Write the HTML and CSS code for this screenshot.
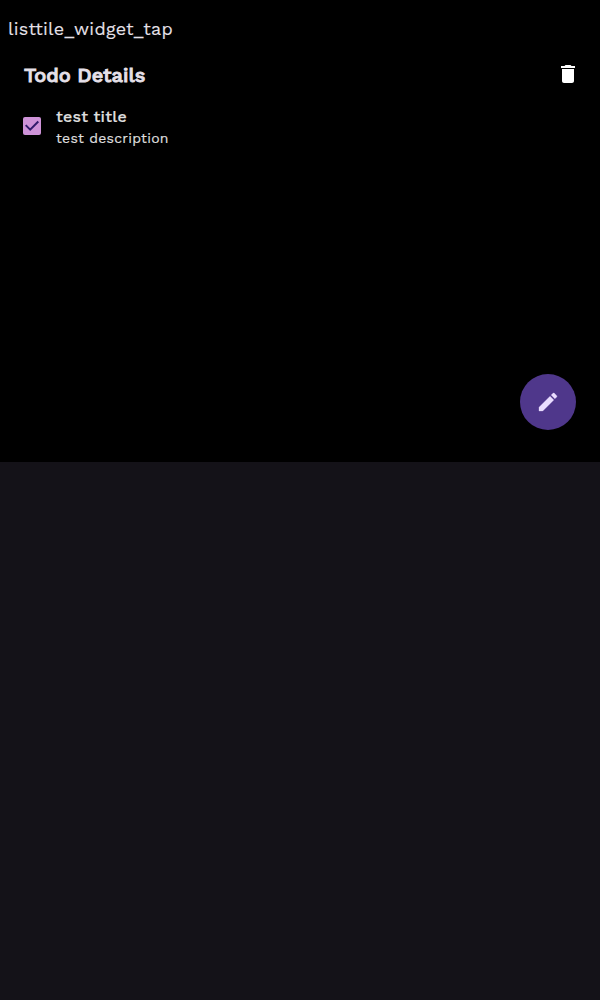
FILE: index.html
```html
<!DOCTYPE html>
<html lang="en">
<head>
<meta charset="utf-8">
<title>Todo Details</title>
<link rel="stylesheet" href="styles.css">
</head>
<body>
<main class="scenario">
  <div class="scenario-name"><span>listtile_widget_tap</span></div>
  <section class="screen">
    <header class="app-bar">
      <h1 class="app-title">Todo Details</h1>
      <svg class="icon delete" viewBox="0 0 24 24"><path d="M6 19c0 1.1.9 2 2 2h8c1.1 0 2-.9 2-2V7H6v12zM19 4h-3.5l-1-1h-5l-1 1H5v2h14V4z"/></svg>
    </header>
    <div class="todo">
      <svg class="checkbox" viewBox="0 0 18 18"><rect class="box" width="18" height="18" rx="2"/><path class="check" d="M2.7 8.1L7.2 12.6L15.3 4.5"/></svg>
      <div class="todo-text">
        <div class="todo-title">test title</div>
        <div class="todo-description">test description</div>
      </div>
    </div>
    <div class="fab">
      <svg class="icon edit" viewBox="0 0 24 24"><path d="M3 17.25V21h3.75L17.81 9.94l-3.75-3.75L3 17.25zM20.71 7.04c.39-.39.39-1.02 0-1.41l-2.34-2.34c-.39-.39-1.02-.39-1.41 0l-1.83 1.83 3.75 3.75 1.83-1.83z"/></svg>
    </div>
  </section>
</main>
</body>
</html>
```
FILE: styles.css
```css
body {
  margin: 0;
  min-height: 1000px;
  background: #141218;
  color: #e6e0e9;
  font-family: "Work Sans", Inter, "Open Sans", sans-serif;
}
.scenario {
  display: flex;
  flex-direction: column;
  height: 462px;
  background: #000;
}
.scenario-name {
  height: 21px;
  padding: 18px 8px 7px;
  font-size: 18px;
  line-height: 21px;
  letter-spacing: 0.25px;
  -webkit-text-stroke: 0.1px #e6e0e9;
}
.screen {
  flex: 1;
  display: flex;
  flex-direction: column;
}
.app-bar {
  display: flex;
  align-items: center;
  justify-content: space-between;
  height: 56px;
  padding: 0 20px 0 24px;
}
.app-title {
  margin: 0;
  padding-top: 2px;
  font-size: 20px;
  line-height: 24px;
  font-weight: 500;
  letter-spacing: 0;
  -webkit-text-stroke: 0.9px #e6e0e9;
}
.icon {
  width: 24px;
  height: 24px;
  fill: #eaddff;
}
.delete {
  fill: #fff;
}
.edit {
  stroke: #eaddff;
  stroke-width: 0.3;
}
.todo {
  display: flex;
  align-items: center;
  gap: 15px;
  height: 48px;
  padding-left: 23px;
}
.checkbox {
  width: 18px;
  height: 18px;
}
.box {
  fill: #ce93d8;
}
.check {
  fill: none;
  stroke: #311b6b;
  stroke-width: 2;
}
.todo-title {
  padding-top: 2px;
  font-size: 16px;
  line-height: 22px;
  font-weight: 500;
  letter-spacing: 0.25px;
  color: #dedede;
  -webkit-text-stroke: 0.2px #dedede;
}
.todo-description {
  font-size: 14px;
  line-height: 20px;
  letter-spacing: 0.25px;
  color: #dedede;
  -webkit-text-stroke: 0.2px #dedede;
}
.fab {
  display: flex;
  align-items: center;
  justify-content: center;
  width: 56px;
  height: 56px;
  margin: auto 24px 32px auto;
  border-radius: 50%;
  background: #4f378b;
}
```
